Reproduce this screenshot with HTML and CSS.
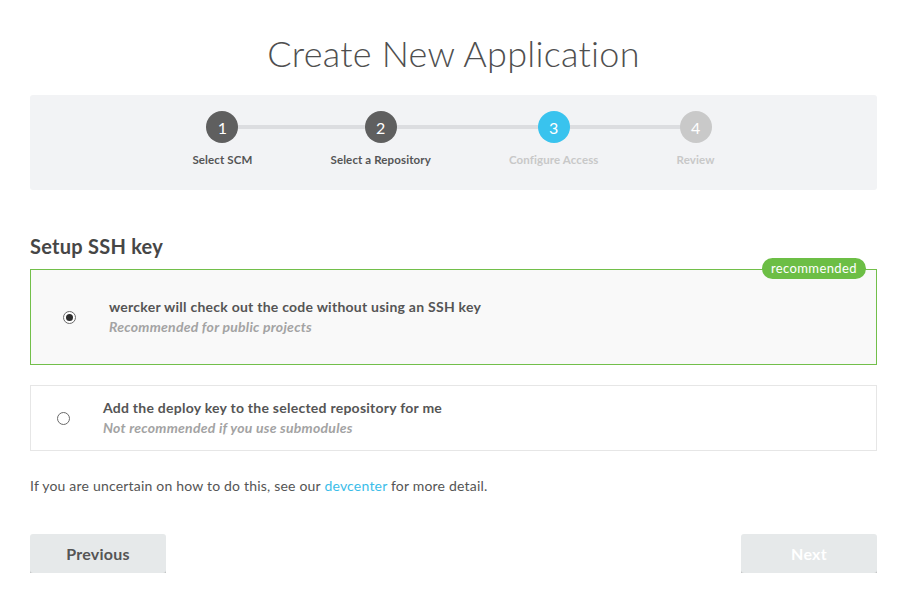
FILE: index.html
```html
<!DOCTYPE html>
<html>
<head>
<meta charset="utf-8">
<link rel="stylesheet" href="styles.css">
</head>
<body>
<div class="page">
  <h1 class="title">Create New Application</h1>
  <div class="steps-panel">
    <div class="steps">
      <div class="step done"><span class="dot">1</span><span class="label">Select SCM</span></div>
      <div class="step done"><span class="dot">2</span><span class="label">Select a Repository</span></div>
      <div class="step current"><span class="dot">3</span><span class="label">Configure Access</span></div>
      <div class="step todo"><span class="dot">4</span><span class="label">Review</span></div>
    </div>
  </div>

  <h2 class="section-title">Setup SSH key</h2>

  <div class="option selected">
    <span class="badge">recommended</span>
    <span class="radio checked"></span>
    <div class="option-text">
      <div class="option-title">wercker will check out the code without using an SSH key</div>
      <div class="option-sub">Recommended for public projects</div>
    </div>
  </div>

  <div class="option">
    <span class="radio"></span>
    <div class="option-text">
      <div class="option-title">Add the deploy key to the selected repository for me</div>
      <div class="option-sub">Not recommended if you use submodules</div>
    </div>
  </div>

  <p class="help">If you are uncertain on how to do this, see our <a href="#" class="link">devcenter</a> for more detail.</p>

  <div class="actions">
    <button class="btn">Previous</button>
    <button class="btn disabled">Next</button>
  </div>
</div>
</body>
</html>
```

FILE: styles.css
```css
* { box-sizing: border-box; }

html, body {
  margin: 0;
  padding: 0;
  background: #ffffff;
}

body {
  font-family: Lato, "Liberation Sans", sans-serif;
  color: #555555;
  letter-spacing: 0.25px;
}

.page {
  padding: 0 31px 0 30px;
}

.title {
  margin: 31px 0 20px;
  font-size: 36px;
  line-height: 44px;
  font-weight: 300;
  color: #4f4f4f;
  text-align: center;
}

.steps-panel {
  background: #f2f3f5;
  border-radius: 3px;
  padding: 16px 0 23px;
}

.steps {
  display: flex;
  justify-content: center;
  gap: 78px;
}

.step {
  position: relative;
  display: flex;
  flex-direction: column;
  align-items: center;
}

.step::before,
.step::after {
  content: "";
  position: absolute;
  top: 14px;
  height: 4px;
  background: #dcdde0;
}

.step::before {
  left: -78px;
  right: 50%;
}

.step::after {
  left: 50%;
  right: 0;
}

.step:first-child::before,
.step:last-child::after {
  display: none;
}

.dot {
  position: relative;
  z-index: 1;
  width: 32px;
  height: 32px;
  border-radius: 50%;
  display: flex;
  align-items: center;
  justify-content: center;
  color: #ffffff;
  font-size: 16px;
  letter-spacing: 0;
  background: #5f5f5f;
}

.current .dot { background: #39c3ee; }
.todo .dot { background: #c9c9c9; }

.label {
  margin-top: 10px;
  font-size: 11.5px;
  line-height: 14px;
  font-weight: 700;
  letter-spacing: 0.12px;
  color: #555555;
  white-space: nowrap;
}

.current .label,
.todo .label {
  color: #c8c8c8;
}

.section-title {
  margin: 44px 0 11px;
  font-size: 20px;
  line-height: 24px;
  font-weight: 700;
  color: #464646;
}

.option {
  position: relative;
  display: flex;
  align-items: center;
  gap: 33px;
  border: 1px solid #e6e6e6;
  background: #ffffff;
  padding: 12px 20px 12px 26px;
  margin-bottom: 20px;
}

.option.selected {
  border-color: #72bf4a;
  background: #f9f9f9;
  padding: 27px 20px 27px 32px;
}

.badge {
  position: absolute;
  top: -12px;
  right: 10px;
  height: 21px;
  line-height: 21px;
  padding: 0 9px;
  border-radius: 11px;
  background: #6cbe45;
  color: #ffffff;
  font-size: 13px;
  letter-spacing: 0.4px;
}

.radio {
  flex: none;
  width: 13px;
  height: 13px;
  border-radius: 50%;
  border: 1px solid #6a6a6a;
  background: #ffffff;
  display: flex;
  align-items: center;
  justify-content: center;
}

.radio.checked::after {
  content: "";
  width: 7px;
  height: 7px;
  border-radius: 50%;
  background: #2e2e2e;
}

.option-title {
  font-size: 14px;
  line-height: 20px;
  font-weight: 700;
  color: #555555;
}

.option-sub {
  font-size: 14px;
  line-height: 20px;
  font-weight: 700;
  font-style: italic;
  color: #a3a3a3;
}

.help {
  margin: 25px 0 38px;
  font-size: 14px;
  line-height: 20px;
  letter-spacing: 0.2px;
  color: #555555;
}

.link {
  color: #3bbde9;
  text-decoration: none;
}

.actions {
  display: flex;
  justify-content: space-between;
}

.btn {
  width: 136px;
  height: 39px;
  border: none;
  border-radius: 3px;
  background: #e6e9ea;
  box-shadow: 0 2px 0 #c2c4c5;
  font-family: Lato, "Liberation Sans", sans-serif;
  font-size: 16px;
  font-weight: 700;
  letter-spacing: 0.25px;
  color: #555555;
  padding: 0;
}

.btn.disabled {
  color: #ffffff;
}
```
